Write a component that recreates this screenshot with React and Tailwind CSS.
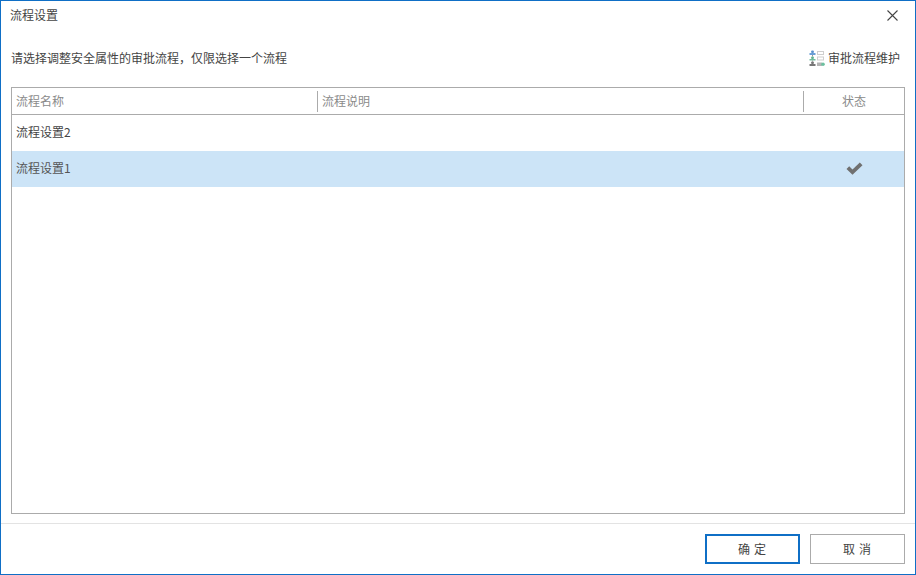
const F = '"Noto Sans CJK SC", "Liberation Sans", sans-serif';

function FlowIcon() {
  return (
    <svg width="16" height="17" viewBox="0 0 16 17" className="block">
      <rect x="2" y="0.5" width="3" height="2.5" rx="1.2" fill="#5b93cf" />
      <rect x="0.5" y="3" width="6" height="2" fill="#6b9fd6" />
      <rect x="3" y="5" width="1" height="1.5" fill="#999" />
      <rect x="2" y="6.5" width="3" height="2.5" rx="1.2" fill="#62b592" />
      <rect x="0.5" y="9" width="6" height="1.5" fill="#72bd9e" />
      <rect x="3" y="10.5" width="1" height="1" fill="#999" />
      <rect x="2" y="11.5" width="3" height="2.5" rx="1.2" fill="#777" />
      <rect x="0.5" y="14" width="6" height="2" fill="#777" />
      <rect x="8.5" y="1.5" width="6" height="3" fill="#fff" stroke="#cfcfcf" />
      <rect x="8.5" y="7" width="6" height="3" fill="#fff" stroke="#cfcfcf" />
      <rect x="8" y="12.5" width="5" height="3.5" fill="#b4b4b4" />
      <circle cx="14" cy="14.2" r="1.8" fill="#6cc0a0" />
    </svg>
  );
}

function Row({ name, selected }) {
  return (
    <div className={`h-9 flex items-center pl-1 pb-[2px] text-[12px] ${selected ? 'bg-[#cce4f7] text-[#555]' : 'text-[#444]'}`}>
      <span className="flex-1">{name}</span>
      {selected && (
        <span className="w-[101px] flex justify-center pt-[1px]">
          <svg width="17" height="13" viewBox="0 0 17 13" className="block translate-x-[1px]">
            <path d="M0.5 7 L3.2 4.3 L6.5 7.5 L13.8 0.5 L16.5 3.2 L6.5 12.8 Z" fill="#707070" />
          </svg>
        </span>
      )}
    </div>
  );
}

export default function App() {
  return (
    <div
      className="w-[916px] h-[575px] border border-[#0f6fc6] bg-white flex flex-col text-[#444] overflow-hidden"
      style={{ fontFamily: F }}
    >
      <div className="h-[30px] shrink-0 flex items-center justify-between pl-[9px] pr-[17px] pb-[2px] text-[12px]">
        <span>流程设置</span>
        <svg width="11" height="11" viewBox="0 0 11 11" className="block">
          <path d="M0.5 0.5 L10.5 10.5 M10.5 0.5 L0.5 10.5" stroke="#444" strokeWidth="1.1" fill="none" />
        </svg>
      </div>

      <div className="h-[56px] shrink-0 flex items-center justify-between pl-[10px] pr-[15px] pb-[2px] text-[12px]">
        <span>请选择调整安全属性的审批流程，仅限选择一个流程</span>
        <span className="flex items-center gap-[3px]">
          <FlowIcon />
          <span>审批流程维护</span>
        </span>
      </div>

      <div className="mx-[10px] flex-1 min-h-0 border border-[#ababab] flex flex-col">
        <div className="h-[27px] shrink-0 flex items-center border-b border-[#ababab] text-[12px] text-[#8a8a8a]">
          <div className="w-[305px] pl-1">流程名称</div>
          <div className="flex-1 h-[21px] border-l border-[#ababab] pl-1 flex items-center">流程说明</div>
          <div className="w-[101px] h-[21px] border-l border-[#ababab] flex items-center justify-center">状态</div>
        </div>
        <Row name="流程设置2" />
        <Row name="流程设置1" selected />
      </div>

      <div className="mt-[9px] h-[51px] shrink-0 border-t border-[#e3e3e3] flex justify-end items-start gap-[10px] pt-[10px] pr-[10px]">
        <button className="w-[95px] h-[30px] border-2 border-[#0f6fc6] bg-white pl-[3px] text-[12px] text-[#444] tracking-[4px] flex items-center justify-center">确定</button>
        <button className="w-[95px] h-[30px] border border-[#ababab] bg-white pl-[3px] text-[12px] text-[#444] tracking-[4px] flex items-center justify-center">取消</button>
      </div>
    </div>
  );
}
